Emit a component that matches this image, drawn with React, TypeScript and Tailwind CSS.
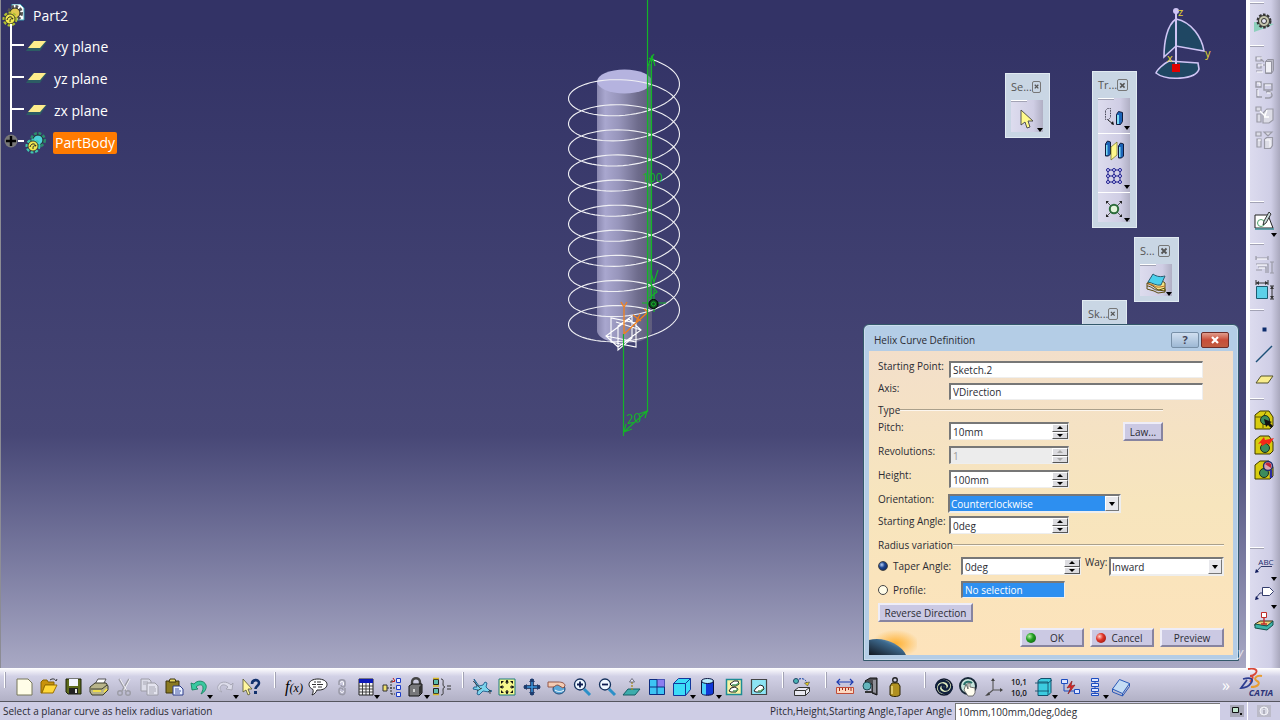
import React, { useState } from "react";

type ToolItem = { icon: string; label: string; drop?: boolean };

// All tool icons share a 24x24 grid
const icons: Record<string, React.ReactNode> = {
  newFile: <path d="M5 4h11l4 4v12H5z" fill="#fffde8" stroke="#77775a" />,
  open: (
    <>
      <path d="M4 7l2-2h4l1 2h6v3H8l-3 8H4z" fill="#c8920c" stroke="#8a6400" />
      <path d="M8 10h12l-4 8H5z" fill="#ffd83a" stroke="#9a7000" />
      <path d="M13 5c3-2 5-1 6 1l1-2" fill="none" stroke="#333" />
    </>
  ),
  save: (
    <>
      <path d="M4 4h15v15H6l-2-2z" fill="#5d6a1c" stroke="#1c2208" />
      <path d="M7 4h9v7H7z" fill="#f2f4ff" />
      <path d="M7 13h9v6H7z" fill="#222" />
      <path d="M13 14h2v4h-2z" fill="#e8e8e8" />
    </>
  ),
  print: (
    <>
      <path d="M8 9l3-5h8l-3 6z" fill="#fff" stroke="#555" />
      <path d="M3 12l5-4h11l2 3v4l-5 5H5l-2-3z" fill="#b8b48a" stroke="#3c3c2c" />
      <path d="M4 14h11l5-4" fill="none" stroke="#3c3c2c" />
      <path d="M6 16h8M17 17l3-3" stroke="#ffe93a" strokeWidth="1.5" />
    </>
  ),
  cut: (
    <>
      <path d="M7 4l7 12M17 4l-7 12" stroke="#9c9ca6" strokeWidth="1.5" />
      <path d="M8 4l7 12M18 4l-6 11" stroke="#fff" strokeWidth=".8" />
      <circle cx="8" cy="18" r="2.3" fill="none" stroke="#9c9ca6" strokeWidth="1.4" />
      <circle cx="16" cy="18" r="2.3" fill="none" stroke="#9c9ca6" strokeWidth="1.4" />
    </>
  ),
  copy: (
    <>
      <path d="M4 4h8l2 2v10H4z" fill="#dcdce8" stroke="#9c9ca6" />
      <path d="M10 8h8l3 3v9H10z" fill="#e4e4ef" stroke="#9c9ca6" />
      <path d="M6 7h5M6 9h3M12 12h6M12 14h7M12 16h7M12 18h5" stroke="#a8a8b4" />
    </>
  ),
  paste: (
    <>
      <path d="M4 6h13v12H4z" fill="#8a7a22" stroke="#3c340c" />
      <path d="M8 4h5l1 3H7z" fill="#e8d860" stroke="#3c340c" />
      <path d="M11 11h7l3 3v6H11z" fill="#e8f0ff" stroke="#2c3c8a" />
      <path d="M13 14h4M13 16h6M13 18h5" stroke="#4c5ca8" />
    </>
  ),
  undo: (
    <path
      d="M4 8l1 7 6-1-2-2c3-3 7-3 7 1 0 2-1 4-2 6 4-2 6-6 5-9-2-5-9-5-12-1z"
      fill="#39c9a0"
      stroke="#137a58"
      strokeWidth=".8"
    />
  ),
  redo: (
    <path
      d="M20 8l-1 7-6-1 2-2c-3-3-7-3-8 1 0 2 1 3 2 4-4-1-5-4-4-6 2-5 9-5 13-1z"
      fill="#dcdcea"
      stroke="#a4a4b2"
      strokeWidth=".9"
    />
  ),
  whatsThis: (
    <>
      <path d="M4 4v13l3-2 2 5 2-1-2-5h4z" fill="#fff6a0" stroke="#55552c" strokeWidth=".8" />
      <path d="M13 9c0-5 7-5 7-1 0 3-3.500 3-3.500 6" fill="none" stroke="#10306c" strokeWidth="2.6" />
      <path d="M15 16h3v3h-3z" fill="#10306c" />
    </>
  ),
  comment: (
    <>
      <path d="M12 4c5 0 9 2 9 5.500S17 15 13 15l-2 0c-1 2-2 4-5 5 1-2 1.500-4 1-5.500C5 13.500 3 12 3 9.500 3 6 7 4 12 4z" fill="#fff" stroke="#222" />
      <path d="M8 7h2M11 7h4M6 9.500h4M11 9.500h6M7 12h3M12 12h4" stroke="#333" />
    </>
  ),
  chain: (
    <>
      <path d="M9 10V7c0-3 6-3 6 0v3c0 3-4 2-4 0M15 13v4c0 4-6 3-6 0v-2c0-3 4-2 4 0" fill="none" stroke="#9a9aa8" strokeWidth="1.500" />
      <path d="M10.500 8c0-2 3-2 3 0v2M13.500 16c0 2-3 2-3 0" fill="none" stroke="#fff" />
    </>
  ),
  table: (
    <>
      <path d="M5 4h14v16H5z" fill="#f4f4f4" stroke="#222" />
      <path d="M5 4h14v4H5z" fill="#0c18b8" />
      <path d="M5 11h14M5 14h14M5 17h14M8.500 8v12M12 8v12M15.500 8v12" stroke="#333" strokeWidth=".9" />
    </>
  ),
  relations: (
    <>
      <path d="M3 10h4v6H3z" fill="#f0e070" stroke="#333" />
      <path d="M7 13h8M11 6v13M11 6h4M11 19h4" stroke="#333" strokeDasharray="2 1" fill="none" />
      <path d="M16.500 3.500h4v4h-4zM16.500 10.500h4v4h-4zM16.500 17.500h4v4h-4z" fill="#eef" stroke="#1c3cc8" />
      <path d="M13 3l2 3-3 1" fill="none" stroke="#c01818" />
    </>
  ),
  padlock: (
    <>
      <path d="M8 10V7c0-5 8-5 8 0v3" fill="none" stroke="#444" strokeWidth="2.400" />
      <path d="M5 11l3-2h10v9l-3 3H5z" fill="#77777a" stroke="#111" />
      <path d="M15 12v8l3-3V9z" fill="#333" />
      <path d="M10 14v3" stroke="#eee" strokeWidth="1.500" />
    </>
  ),
  equiv: (
    <>
      <path d="M3.500 4.500h5v5h-5zM3.500 13.500h5v5h-5z" fill="#5cbcae" stroke="#222" />
      <path d="M3 3.500h6M3 11h6M3 19.500h6" stroke="#d8b820" strokeWidth="1.400" />
      <path d="M11 4c3 0 2 3 2 5s1 3 2 3c-1 0-2 1-2 3s1 5-2 5M17 11h4M17 14h4" fill="none" stroke="#333" />
    </>
  ),
  fly: (
    <>
      <path d="M4 4l5 7 4-1 2-3 2 1-1 4 3 3 3 1-3 1-6-1-4 4-2-1 1-4-5-1 1-2 3 0z" fill="#7cd4ec" stroke="#1c5c8c" strokeWidth=".9" />
      <path d="M3 6l8 8M18 17l2-2v4M7 16l5-3" stroke="#333" strokeWidth=".8" fill="none" />
    </>
  ),
  fitAll: (
    <>
      <path d="M4 4h16v16H4z" fill="#f8f88c" stroke="#1c7c7c" />
      <path d="M12 5v4M12 15v4M5 12h4M15 12h4" stroke="#111" strokeWidth="1.200" />
      <path d="M10 7.500L12 5l2 2.500zM10 16.500l2 2.500 2-2.500zM7.500 10L5 12l2.500 2zM16.500 10l2.500 2-2.500 2z" fill="#111" />
      <path d="M6 6h3L6 9zM18 6h-3l3 3zM6 18h3l-3-3zM18 18h-3l3-3z" fill="#111" />
    </>
  ),
  pan: (
    <>
      <path d="M12 4v16M4 12h16" stroke="#0c2450" strokeWidth="3.500" />
      <path d="M12 5v14M5 12h14" stroke="#3c98e0" strokeWidth="1.500" />
      <path d="M9 7l3-4 3 4zM9 17l3 4 3-4zM7 9l-4 3 4 3zM17 9l4 3-4 3z" fill="#1c3c70" />
    </>
  ),
  rotate: (
    <>
      <ellipse cx="14" cy="14" rx="6" ry="5" fill="#5ca8d8" stroke="#1c4878" />
      <path d="M3 7h10c4 0 7 1 7 4l-2 2-5-3c-3 0-3 2-5 2H3z" fill="#f4ccb4" stroke="#8c4c3c" strokeWidth=".9" />
      <path d="M10 15c3 2 6 2 9 0" fill="none" stroke="#fff" />
    </>
  ),
  zoomIn: (
    <>
      <path d="M14 14l6 6" stroke="#2c90c8" strokeWidth="3" />
      <circle cx="10" cy="9.500" r="5.500" fill="#eef8ff" stroke="#14305c" strokeWidth="1.300" />
      <path d="M7 9.500h6M10 6.500v6" stroke="#0c1c50" strokeWidth="1.800" />
    </>
  ),
  zoomOut: (
    <>
      <path d="M14 14l6 6" stroke="#2c90c8" strokeWidth="3" />
      <circle cx="10" cy="9.500" r="5.500" fill="#eef8ff" stroke="#14305c" strokeWidth="1.300" />
      <path d="M7 9.500h6" stroke="#0c1c50" strokeWidth="1.800" />
    </>
  ),
  normalView: (
    <>
      <path d="M8 14h12l-5 6H3z" fill="#3cacac" stroke="#145c64" />
      <path d="M12 15V6" stroke="#a88c20" strokeDasharray="2 1" strokeWidth="1.300" />
      <path d="M9.500 7L12 3.500 14.500 7z" fill="#eef" stroke="#556" strokeWidth=".8" />
    </>
  ),
  multiView: (
    <>
      <path d="M4.500 4.500h15v15h-15z" fill="#3cc4f4" stroke="#0c2c80" />
      <path d="M12 4.500h7.500V12H12z" fill="#8c7cf0" />
      <path d="M12 4.500v15M4.500 12h15" stroke="#0c2c80" />
    </>
  ),
  isoView: (
    <>
      <path d="M3.500 8.500l5-5h12v11l-5 6h-12z" fill="#3cdcf8" stroke="#14389c" />
      <path d="M3.500 8.500h12v12M15.500 8.500l5-5" fill="none" stroke="#14389c" />
    </>
  ),
  shading: (
    <>
      <path d="M5.500 6v12c0 3 12 3 12 0V6z" fill="#1038d8" stroke="#0c1440" />
      <path d="M6 7h4v12.500C8 19.500 6 19 6 18z" fill="#4cd0f8" />
      <ellipse cx="11.500" cy="6" rx="6" ry="2.500" fill="#b8ecfc" stroke="#0c1440" />
    </>
  ),
  hideShow: (
    <>
      <path d="M4.500 4.500h15v15h-15z" fill="#f8f4a4" stroke="#1c8c94" strokeWidth="1.500" />
      <path d="M8 9l4-3h4l1 3-3 2h-4zM7 16l2-3 4-1 3 2-2 3H9z" fill="#fff" stroke="#222" />
      <path d="M10 10h4l3-2M11 16h3l2-2" stroke="#4c9c5c" strokeWidth="1.500" fill="none" />
    </>
  ),
  swapVisible: (
    <>
      <path d="M4.500 4.500h15v15h-15z" fill="#8ce4f4" stroke="#444" strokeWidth="1.200" />
      <path d="M7 16l2-3 4-3 3 1 1 3-3 3H9z" fill="#fff" stroke="#222" />
      <path d="M11 16h3l2-2" stroke="#4c9c5c" strokeWidth="1.500" fill="none" />
    </>
  ),
  material: (
    <>
      <path d="M4.500 15.500l4-3h11v4l-4 4h-11zM4.500 15.500h11v5M15.500 15.500l4-3" fill="#e8e8f0" stroke="#333" />
      <circle cx="6" cy="6" r="2.500" fill="#48b4b4" stroke="#246" />
      <path d="M9 4c4-1 7 0 8 5" fill="none" stroke="#0c3ca0" strokeDasharray="2 1" />
      <path d="M14.500 8l3 3 2-4z" fill="#e8d020" stroke="#444" strokeWidth=".6" />
    </>
  ),
  measure: (
    <>
      <path d="M4 7h16M7 4L4 7l3 3M17 4l3 3-3 3" fill="none" stroke="#1c3cb0" strokeWidth="1.200" />
      <path d="M3.500 12.500h17v6h-17z" fill="#fcd8c0" stroke="#c04c38" />
      <path d="M6.500 13v3M9.500 13v2M12.500 13v3M15.500 13v2M18 13v3" stroke="#a02818" />
    </>
  ),
  clamp: (
    <>
      <path d="M7 6l5-3h7v17l-5-2V9H9z" fill="#4c4c50" stroke="#111" />
      <path d="M15 5h3v13l-3-1z" fill="#909098" />
      <circle cx="9" cy="11" r="4" fill="#64b4bc" stroke="#1c4c54" />
      <path d="M7 17h7" stroke="#333" strokeWidth="2" />
    </>
  ),
  weight: (
    <>
      <circle cx="12" cy="5" r="2.300" fill="none" stroke="#222" strokeWidth="1.400" />
      <path d="M9 8h6l2 3v9c-2 2-8 2-10 0v-9z" fill="#b09020" stroke="#2c2408" />
      <path d="M9 11v8" stroke="#ecd880" strokeWidth="1.500" />
    </>
  ),
  update: (
    <>
      <circle cx="12" cy="12" r="8" fill="#e4f0c0" stroke="#10182c" strokeWidth="1.500" />
      <path d="M4 13c0-7 8-9 12-5 3 4-1 8-4 6-2-1-2-3 0-4M20 11c0 7-8 9-12 5-3-4 1-8 4-6 2 1 2 3 0 4" fill="none" stroke="#10203c" strokeWidth="2.200" />
    </>
  ),
  manualUpdate: (
    <>
      <circle cx="11" cy="11" r="8" fill="#c8e4dc" stroke="#182838" strokeWidth="2" />
      <path d="M7 10c1-4 6-4 8-2" fill="none" stroke="#287068" strokeWidth="2" />
      <path d="M9 9l2 5V8h2v4l5 1v5l-2 3h-5l-4-6z" fill="#fffdf0" stroke="#555" strokeWidth=".8" />
    </>
  ),
  axis: (
    <>
      <path d="M11 4v11h9M11 15l-6 5" fill="none" stroke="#555" strokeWidth="1.100" />
      <path d="M9 6l2-3 2 3zM18 13l3 2-3 2zM7 17l-4 4 5-1z" fill="#444" />
    </>
  ),
  meanDims: (
    <>
      <text x="12" y="10" textAnchor="middle" fontSize="8" fontWeight="600" fill="#111">10,1</text>
      <text x="12" y="21" textAnchor="middle" fontSize="8" fontWeight="600" fill="#111">10,0</text>
    </>
  ),
  grid3d: (
    <>
      <path d="M6 5.500l3-2h10v14l-3 3H6z" fill="#3ccce0" stroke="#14506c" />
      <path d="M16 7v13M3 8h13l4-3M3 16h14M6 7h10" fill="none" stroke="#14506c" strokeWidth=".9" />
    </>
  ),
  publish: (
    <>
      <path d="M3.500 4.500h6v4h-6zM16.500 14.500h5v4h-5z" fill="#dde4ff" stroke="#1c4cc0" />
      <path d="M6 9v7h10" fill="none" stroke="#1c4cc0" />
      <path d="M14 6l-5 7 4-1-3 7 7-9-4 1z" fill="#e02828" stroke="#801010" strokeWidth=".6" />
    </>
  ),
  stack: (
    <path d="M8.500 3.500h7v3h-7zM8.500 8.500h7v3h-7zM8.500 13.500h7v3h-7zM8.500 18.500h7v2h-7zM12 6.500v2M12 11.500v2M12 16.500v2" fill="#dfe6ff" stroke="#1c4cc0" />
  ),
  catalog: (
    <>
      <path d="M3.500 14l7-9.500 10 4-7 10z" fill="#c4dcf4" stroke="#2858b8" />
      <path d="M3.500 14v3l10 4 7-9.500v-3M13.500 18.500V21" fill="none" stroke="#2858b8" />
    </>
  ),
  gear: (
    <>
      <path d="M2 12l20 2-6 3-14 5z" fill="#8cd0bc" />
      <circle cx="12" cy="11" r="6" fill="#c8c8a8" stroke="#333" strokeWidth="3" strokeDasharray="2.400 1.400" />
      <circle cx="12" cy="11" r="5.500" fill="#c4c4ac" stroke="#333" />
      <circle cx="12" cy="11" r="2.500" fill="#e4e4f0" stroke="#333" />
    </>
  ),
  ghostPart: (
    <>
      <path d="M13.500 8.500l2-2h6v11l-2 3h-6zM13.500 8.500h6v12" fill="#b8b8c4" stroke="#9494a0" />
      <path d="M14 9h5v10h-5z" fill="#f0f0f6" />
      <path d="M4 4h5v4H4zM5 11h4v4H5zM4 18h6M9 6l3 3M11 12h3" fill="none" stroke="#9a9aa6" strokeWidth="1.200" />
      <path d="M5 5h5M6 12h5M5 19h6" stroke="#fff" />
    </>
  ),
  ghostPair: (
    <>
      <path d="M4 4h5v5H4zM12 6h8v6h-8zM14 14c5-2 9 5 3 6h-4M5 11v8h5" fill="none" stroke="#9a9aa6" strokeWidth="1.400" />
      <path d="M5 5h3v3M13 7h6M15 15h4M6 12v6" fill="none" stroke="#fff" />
    </>
  ),
  ghostCut: (
    <>
      <path d="M4 4h5v4H4zM5 11h4v8H5zM11 10l4-4h6v11l-4 3h-6z" fill="#dcdce6" stroke="#9a9aa6" strokeWidth="1.200" />
      <path d="M8 8l5 5 2-6M12 14h5" fill="none" stroke="#fff" strokeWidth="1.300" />
    </>
  ),
  ghostCube: (
    <>
      <path d="M12.500 11.500l2-2h6v8l-2 3h-6zM4 4h5v4H4zM12 4h8l-4 4zM5 11h4v8H5z" fill="#dcdce6" stroke="#9a9aa6" strokeWidth="1.200" />
      <path d="M13 12h5v7M6 12h3" fill="none" stroke="#fff" />
    </>
  ),
  sketcher: (
    <>
      <path d="M3 6h13l5 13H3z" fill="#fff" stroke="#222" />
      <path d="M3 20h19" stroke="#3c8c94" strokeWidth="1.500" />
      <circle cx="9" cy="14" r="3.500" fill="none" stroke="#4ca46c" />
      <path d="M17 3l-5 9-1 4 3-2 5-9z" fill="#c8d8d8" stroke="#222" strokeWidth=".9" />
    </>
  ),
  ghostDims: (
    <>
      <path d="M4 5h12M4 3v4M16 3v4M20 9v11M18 9h4M18 20h4M4 11h12v9M6 14h8v6M4 17h6" fill="none" stroke="#9a9aa6" strokeWidth="1.200" />
      <path d="M5 6h10M5 12h10M7 15h6" stroke="#fff" />
    </>
  ),
  constraint: (
    <>
      <path d="M4.500 8.500h11v12h-11z" fill="#5cd0e8" stroke="#1c5c70" />
      <path d="M4 5h12M4 2v5M16 2v5M20 8v13M18 8h4M18 21h4" stroke="#333" fill="none" />
      <path d="M4 5l3-2v4zM16 5l-3-2v4zM20 8l-2 3h4zM20 21l-2-3h4z" fill="#333" />
    </>
  ),
  point: <path d="M10.500 10.500h4v4h-4z" fill="#0c2c6c" />,
  line: <path d="M4 20L20 4" stroke="#1c5078" strokeWidth="1.500" />,
  plane: <path d="M9 9h12l-5 7H4z" fill="#f8ec8c" stroke="#54542c" />,
  partGreen: (
    <>
      <path d="M3 7l5-4h9l4 6v9l-3 3H3z" fill="#d8cc10" stroke="#3c3800" />
      <path d="M3 9h8l3-5M11 9v11" fill="none" stroke="#5c5600" />
      <circle cx="13" cy="12" r="4.500" fill="#3c8c5c" stroke="#1c2c1c" />
      <path d="M12 11l2 8 2-2 3 3 2-2-3-3 2-1z" fill="#111" />
    </>
  ),
  partRed: (
    <>
      <path d="M3 7l5-4h9l4 6v9l-3 3H3z" fill="#d8cc10" stroke="#3c3800" />
      <circle cx="13" cy="15" r="4.500" fill="#3c8c5c" stroke="#1c2c1c" />
      <path d="M6 11l6-7 1 3 9-2-5 7-2-2-5 3-1-3z" fill="#f42818" />
    </>
  ),
  partBlue: (
    <>
      <path d="M3 7l5-4h9l4 6v9l-3 3H3z" fill="#d8cc10" stroke="#3c3800" />
      <circle cx="12" cy="15" r="4.500" fill="#3c8c5c" stroke="#1c2c1c" />
      <circle cx="16" cy="8" r="4.500" fill="#d8a4b0" stroke="#1c2c6c" strokeWidth="1.400" />
      <path d="M13 6c2-2 4-2 6 0v4z" fill="#c02838" />
      <path d="M19 12v8" stroke="#2c2ca0" strokeWidth="2.500" />
    </>
  ),
  textNote: (
    <>
      <text x="14" y="12" textAnchor="middle" fontSize="8" fill="#1c2c6c">ABC</text>
      <path d="M20 13.500H9L4 19" fill="none" stroke="#333c6c" />
      <path d="M3 20l1-4 3 3z" fill="#111c5c" />
    </>
  ),
  flagNote: (
    <>
      <path d="M10.500 6.500h7l4 4-4 4h-7z" fill="#fff" stroke="#333c6c" />
      <path d="M10 12H8l-4 5" fill="none" stroke="#333c6c" />
      <path d="M3 19l1-4 3 3z" fill="#111c5c" />
    </>
  ),
  stamp: (
    <>
      <path d="M3 15l5-3h13l-5 5H3z" fill="#e8d078" stroke="#3c2c10" />
      <path d="M3 15v4l12 2 6-5v-4l-6 5z" fill="#3cb4a8" stroke="#14504c" />
      <path d="M9.500 3.500h5v5h-5z" fill="#fff" stroke="#c02c2c" />
      <path d="M12 9v6M9 15h6" stroke="#c02c2c" strokeWidth="1.400" />
    </>
  ),
  arrow: (
    <path d="M6 3v15l4-3 2 6 3-1-2-6h5z" fill="#fffa8c" stroke="#444" strokeWidth=".9" />
  ),
  translate: (
    <>
      <path d="M3.500 5.500l2-2h3v9l-2 2h-3z" fill="none" stroke="#445" strokeDasharray="1.500 1" />
      <path d="M6 15l5 4" stroke="#222" />
      <path d="M12 20l-1-4-2 3z" fill="#111" />
      <path d="M14.500 9.500l2-3 4 1v9l-2 3h-4z" fill="#1c64b8" stroke="#101c3c" />
      <path d="M15 10h2v9h-2z" fill="#7cdcf4" />
    </>
  ),
  mirror: (
    <>
      <path d="M3.500 6l2-3 3 1v12l-2 2h-3zM16.500 8l2-3 3 1v12l-2 2h-3z" fill="#1c64b8" stroke="#101c3c" />
      <path d="M4 7h1.500v10H4zM17 9h1.500v10H17z" fill="#7cdcf4" />
      <path d="M9 9l6-5v13l-6 5z" fill="#fff88c" stroke="#6c6c1c" strokeWidth=".7" />
    </>
  ),
  pattern: (
    <>
      <path d="M6 6h12v12H6zM12 6v12M6 12h12" fill="none" stroke="#1c1c8c" />
      {[6, 12, 18].map((x) =>
        [6, 12, 18].map((y) => (
          <circle key={`${x}-${y}`} cx={x} cy={y} r="1.500" fill="#dcdcff" stroke="#1c1c8c" />
        ))
      )}
    </>
  ),
  scale: (
    <>
      <path d="M5 5l4 4M19 5l-4 4M5 19l4-4M19 19l-4-4" stroke="#555" />
      <path d="M4 4h3L4 7zM20 4h-3l3 3zM4 20h3l-3-3zM20 20h-3l3-3z" fill="#222" />
      <circle cx="12" cy="12" r="4.200" fill="#e4f4dc" stroke="#2c6c3c" strokeWidth="2" />
    </>
  ),
  surface: (
    <>
      <path d="M3 12l6 3 5 4 7 1v-8l-4-3z" fill="#f4e484" stroke="#5c4c10" />
      <path d="M3 12v6l7 2 4 2 7-1v-3M3 15c5 0 7 5 12 4l6-2" fill="none" stroke="#5c4c10" />
      <path d="M4 13c6 0 7 4 12 3l5-1" fill="none" stroke="#c0702c" />
      <path d="M4 11l5-8c4 3 8 3 12 2l-4 9c-5 1-8-2-13-3z" fill="#4cd0ec" stroke="#2c5c70" />
    </>
  ),
};

const standardTools: ToolItem[] = [
  { icon: "newFile", label: "New" },
  { icon: "open", label: "Open" },
  { icon: "save", label: "Save" },
  { icon: "print", label: "Print" },
  { icon: "cut", label: "Cut" },
  { icon: "copy", label: "Copy" },
  { icon: "paste", label: "Paste" },
  { icon: "undo", label: "Undo", drop: true },
  { icon: "redo", label: "Redo", drop: true },
  { icon: "whatsThis", label: "What's This?" },
];

const knowledgeTools: ToolItem[] = [
  { icon: "comment", label: "Comment" },
  { icon: "chain", label: "Check" },
  { icon: "table", label: "Design Table", drop: true },
  { icon: "relations", label: "Relations" },
  { icon: "padlock", label: "Lock", drop: true },
  { icon: "equiv", label: "Equivalent Dimensions" },
];

const viewTools: ToolItem[] = [
  { icon: "fly", label: "Fly Mode" },
  { icon: "fitAll", label: "Fit All In" },
  { icon: "pan", label: "Pan" },
  { icon: "rotate", label: "Rotate" },
  { icon: "zoomIn", label: "Zoom In" },
  { icon: "zoomOut", label: "Zoom Out" },
  { icon: "normalView", label: "Normal View" },
  { icon: "multiView", label: "Multi-View" },
  { icon: "isoView", label: "Isometric View", drop: true },
  { icon: "shading", label: "Shading", drop: true },
  { icon: "hideShow", label: "Hide/Show" },
  { icon: "swapVisible", label: "Swap Visible Space" },
];

const measureTools: ToolItem[] = [
  { icon: "measure", label: "Measure Between" },
  { icon: "clamp", label: "Measure Item" },
  { icon: "weight", label: "Measure Inertia" },
];

const otherTools: ToolItem[] = [
  { icon: "update", label: "Update All" },
  { icon: "manualUpdate", label: "Manual Update Mode" },
  { icon: "axis", label: "Axis System" },
  { icon: "meanDims", label: "Mean Dimensions" },
  { icon: "grid3d", label: "Work on Support", drop: true },
  { icon: "publish", label: "Publication" },
  { icon: "stack", label: "Structure", drop: true },
  { icon: "catalog", label: "Catalog" },
];

const planes = ["xy plane", "yz plane", "zx plane"];

const Icon = ({ name }: { name: string }) => (
  <svg viewBox="0 0 24 24" className="size-6 shrink-0" aria-hidden="true">
    {icons[name]}
  </svg>
);

const DropArrow = () => (
  <svg viewBox="0 0 6 4" className="absolute right-0 bottom-0 h-1 w-1.5" aria-hidden="true">
    <path d="M0 0h6L3 4z" fill="#000" />
  </svg>
);

const ToolButton = ({ item, tight }: { item: ToolItem; tight?: boolean }) => (
  <button
    aria-label={item.label}
    className={`relative flex h-[25px] items-center ${tight ? "min-w-6" : "min-w-[25px]"} ${
      item.drop ? "pr-0.5" : ""
    }`}
  >
    <Icon name={item.icon} />
    {item.drop && <DropArrow />}
  </button>
);

const ToolGroup = ({ items, tight }: { items: ToolItem[]; tight?: boolean }) => (
  <div className="flex pt-1.5">
    {items.map((item) => (
      <ToolButton key={item.label} item={item} tight={tight} />
    ))}
  </div>
);

const Separator = ({ className }: { className: string }) => (
  <span className={`mt-1 h-4 w-0.5 shrink-0 border-r border-[#a3a3b5] bg-white ${className}`} />
);

const BottomBar = () => (
  <div className="flex h-[34px] items-start overflow-hidden border-b border-[#55555f] bg-linear-to-b from-white via-[#d2d1e6] via-25% to-[#b2b1c6]">
    <Separator className="mr-1.5 ml-1" />
    <ToolGroup items={standardTools} />
    <Separator className="mr-1.5 ml-2.5" />
    <div className="flex">
      <button aria-label="Formula" className="mt-1.5 h-[25px] w-6 text-center font-['Liberation_Serif',serif] text-base leading-6 whitespace-nowrap text-black italic">
        f<span className="text-xs">(x)</span>
      </button>
      <ToolGroup items={knowledgeTools} tight />
    </div>
    <Separator className="mr-1.5 ml-2" />
    <ToolGroup items={viewTools} />
    <Separator className="mr-1.5 ml-2.5" />
    <ToolGroup items={[{ icon: "material", label: "Apply Material" }]} />
    <Separator className="mr-1.5 ml-2.5" />
    <ToolGroup items={measureTools} />
    <Separator className="mr-1.5 ml-4" />
    <ToolGroup items={otherTools} />
    <div className="ml-auto flex pr-0.5">
      <button aria-label="More tools" className="mt-0.5 text-base leading-4 text-white">»</button>
      <svg viewBox="0 0 40 32" className="ml-2 h-8 w-10" aria-label="CATIA">
        <path d="M10 1c7-1 11 1 7 5-1 1-3 2-5 2 4 0 3 3 0 6" fill="none" stroke="#d84838" strokeWidth="1.800" />
        <path d="M5 11c8-2 11 0 8 4-2 3-6 5-10 5l6-8" fill="none" stroke="#2c3c90" strokeWidth="1.800" />
        <path d="M24 8c-6-1-9 3-5 5s1 6-6 6" fill="none" stroke="#e89c30" strokeWidth="2" />
        <text x="23" y="28" textAnchor="middle" fontSize="9" fontStyle="italic" fontWeight="bold" fill="#2c3478">
          CATIA
        </text>
      </svg>
    </div>
  </div>
);

const StatusBar = () => (
  <div className="flex h-[18px] items-center bg-[#cecde5] pl-[3px]">
    <span>Select a planar curve as helix radius variation</span>
    <label htmlFor="power-input" className="ml-auto pr-[3px]">
      Pitch,Height,Starting Angle,Taper Angle
    </label>
    <input
      id="power-input"
      defaultValue="10mm,100mm,0deg,0deg"
      className="h-[17px] w-[265px] border-t border-l border-[#777] bg-white pl-0.5 outline-none"
    />
    <button aria-label="Power input mode" className="ml-1.5 flex h-full w-[22px] items-center justify-center border-r border-white">
      <svg viewBox="0 0 14 12" className="h-3 w-3.5">
        <path d="M0 0h14v12H0z" fill="#a9a9b8" />
        <path d="M2.500 2.500h6v5h-6z" fill="#c4e8d0" stroke="#111" />
        <path d="M10 8h2v2h-2z" fill="#111" />
      </svg>
    </button>
    <button aria-label="Dialog display" className="flex h-full w-8 items-center justify-center">
      <svg viewBox="0 0 14 12" className="h-3 w-3.5">
        <path d="M0 0h14v12H0z" fill="#bbbac8" />
        <circle cx="7" cy="6" r="4" fill="#d8d8e4" stroke="#f4f4f8" />
        <path d="M7 3v1M7 5v4" stroke="#8a8a98" />
      </svg>
    </button>
  </div>
);

const SideMark = ({ className }: { className?: string }) => (
  <span className={`h-0.5 w-3.5 shrink-0 border-b border-[#a3a3b5] bg-white ${className ?? ""}`} />
);

const SideTool = ({ icon, label, drop }: ToolItem) => (
  <button aria-label={label} className={`relative ml-0.5 flex w-[25px] shrink-0 ${drop ? "h-7" : "h-[25px]"}`}>
    <Icon name={icon} />
    {drop && <DropArrow />}
  </button>
);

const SideBar = () => (
  <div className="flex w-[34px] shrink-0 flex-col border-l-4 border-white bg-linear-to-r from-[#dcdbee] via-[#cfcee6] via-70% to-[#a9a8bd]">
    <SideMark className="mt-0.5 mb-1.5" />
    <SideTool icon="gear" label="Workbench" />
    <SideMark className="mt-2.5 mb-1.5" />
    <SideTool icon="ghostPart" label="Assemble" />
    <SideTool icon="ghostPair" label="Add" />
    <SideTool icon="ghostCut" label="Remove" />
    <SideTool icon="ghostCube" label="Intersect" />
    <SideMark className="mt-12 mb-1.5" />
    <SideTool icon="sketcher" label="Sketch" drop />
    <SideMark className="mt-1.5 mb-2" />
    <SideTool icon="ghostDims" label="Constraints in Dialog" />
    <SideTool icon="constraint" label="Constraint" />
    <SideMark className="mt-1.5 mb-1.5" />
    <SideTool icon="point" label="Point" />
    <SideTool icon="line" label="Line" />
    <SideTool icon="plane" label="Plane" />
    <SideMark className="mt-1.5 mb-2" />
    <SideTool icon="partGreen" label="Select Body" />
    <SideTool icon="partRed" label="Update Body" />
    <SideTool icon="partBlue" label="Inspect Body" />
    <SideMark className="mt-16 mb-1" />
    <SideTool icon="textNote" label="Text with Leader" drop />
    <SideTool icon="flagNote" label="Flag Note with Leader" drop />
    <SideTool icon="stamp" label="Annotation" />
  </div>
);

const Gears = ({ id }: { id: string }) => (
  <svg viewBox="0 0 24 24" className="size-6 shrink-0" aria-hidden="true">
    {id === "root" && <path d="M11 0h8l4 4v12H11z" fill="#fff" stroke="#3ca0b4" />}
    <circle cx="14" cy="9" r="6" fill="none" stroke={id === "root" ? "#555" : "#2c8c6c"} strokeWidth="4" strokeDasharray="2.500 1.500" />
    <circle cx="14" cy="9" r="5" fill={id === "root" ? "#e0c850" : "#4cd0d8"} stroke="#222" />
    <circle cx="9" cy="15" r="5.500" fill="none" stroke={id === "root" ? "#b0c030" : "#40c8b0"} strokeWidth="4" strokeDasharray="2.500 1.500" />
    <circle cx="9" cy="15" r="5" fill="#f0e850" stroke="#222" strokeWidth=".8" />
    <path d="M6 16c1-4 5-4 6-1-3-1-3 1-3 3" fill="none" stroke="#222" />
  </svg>
);

const SpecTree = () => (
  <ul className="relative w-fit text-sm text-white">
    <li className="flex h-[31px] items-center gap-2">
      <Gears id="root" />
      Part2
    </li>
    {planes.map((plane) => (
      <li key={plane} className="flex h-8 items-center pl-[9px]">
        <span className="mb-1 h-0.5 w-3.5 bg-white" />
        <svg viewBox="0 0 24 12" className="mr-1.5 mb-0.5 h-3 w-6" aria-hidden="true">
          <path d="M9 1h14l-7 10H2z" fill="#2c5c64" />
          <path d="M10 1h12l-6 7H4z" fill="#ffec8c" />
        </svg>
        {plane}
      </li>
    ))}
    <li className="flex h-[31px] items-center pl-[3px]">
      <button aria-label="Expand PartBody" className="mb-1 size-3.5 shrink-0">
        <svg viewBox="0 0 14 14">
          <circle cx="7" cy="7" r="6.500" fill="#777" />
          <path d="M7 2v10M2 7h10" stroke="#000" strokeWidth="2.400" />
        </svg>
      </button>
      <span className="mb-1 h-0.5 w-1.5 bg-white" />
      <Gears id="body" />
      <span className="ml-[5px] rounded-xs bg-[#ff7b00] px-0.5 leading-[22px]">PartBody</span>
    </li>
    <span className="absolute top-6 left-[9px] h-27 w-0.5 bg-white" />
  </ul>
);

// Ten turns, sampled and projected as a tilted ellipse that slides down the axis
const helixPath = () => {
  const points: string[] = [];
  const start = -Math.PI / 3;
  const end = start + Math.PI * 20;
  for (let t = start; t < end; t += 0.1) {
    const x = 74 + 55.5 * Math.cos(t);
    const y = 85 + (25.1 * t) / (Math.PI * 2) + 24 * Math.sin(t) - Math.cos(t);
    points.push(`${x.toFixed(1)} ${y.toFixed(1)}`);
  }
  return `M${points.join("L")}`;
};

const Model = () => (
  <svg viewBox="0 0 148 450" className="absolute top-0 left-1/2 h-[450px] w-[148px] -translate-x-1/2" aria-label="Cylinder with helix">
    <defs>
      <linearGradient id="cylinder">
        <stop offset="0" stopColor="#8987ae" />
        <stop offset=".15" stopColor="#a9a7cf" />
        <stop offset=".4" stopColor="#9795bb" />
        <stop offset=".75" stopColor="#6d6b8b" />
        <stop offset="1" stopColor="#5e5c7c" />
      </linearGradient>
    </defs>
    <path d="M47 81v250c2 16 53 16 55 0V81z" fill="url(#cylinder)" />
    <ellipse cx="74.500" cy="81.500" rx="27.500" ry="12" fill="#b5b3df" />
    <path d="M98 64h4v236h-4z" fill="#3c8c58" opacity=".6" />
    <path d={helixPath()} fill="none" stroke="#f0f0f4" strokeWidth="1.100" />
    <g fill="none" stroke="#fff" strokeWidth="1.100">
      <path d="M61 318v24l25 5v-24zM56 336l23-17 12 11-23 17zM68 326v24l14-12v-22zM56 336l30 6M66 322l25 8" />
    </g>
    <g fill="none" stroke="#f0801c" strokeWidth="1.300">
      <path d="M74 334v-24M71 302l3 5 3-5M74 307v5M74 334l24-22M83 315l8 6M90 314l-4 8M94 309l4 3" />
    </g>
    <g fill="none" stroke="#14b428" strokeWidth="1.200">
      <path d="M97.500 0v412M101.500 56v246M73.500 334v102" />
      <path d="M98 66l4-10 3 10M99 58l6 4M104 54l-5 8M100 270l4 12 4-12M99 282l8 10-8 6M92 303h24M104 290v22" />
      <path d="M74 432l23-21M74 432l2-8M74 432l8-3M97 411l-8 3M97 411l-2 7" />
    </g>
    <circle cx="103.500" cy="304" r="4.500" fill="#144c24" stroke="#000" />
    <circle cx="103.500" cy="304" r="2" fill="none" stroke="#14b428" />
    <text x="92" y="182" fontSize="12" fill="#14b428">100</text>
    <text x="77" y="424" fontSize="13" fill="#14b428" transform="rotate(-8 77 424)">20</text>
  </svg>
);

const Compass = () => (
  <svg viewBox="0 0 64 76" className="absolute top-1 right-8 h-19 w-16" aria-label="Compass">
    <g fill="#1f4763" stroke="#cfc4f4" strokeWidth="1.600">
      <path d="M26 15C17 21 14 38 14 53l12-11 28 5C52 34 42 18 26 15z" />
      <path d="M19 57c-6 3-12 9-13 12 10 8 40 7 43-4l-1-6z" />
      <path d="M26 8v56" strokeWidth="2" />
    </g>
    <circle cx="26" cy="7" r="3" fill="#cfc4f4" />
    <path d="M22 60h8v8h-8z" fill="#e00000" />
    <g fontSize="11" fill="#e8d82c">
      <text x="28" y="12">z</text>
      <text x="55" y="53">y</text>
      <text x="17" y="58">x</text>
    </g>
  </svg>
);

type PaletteProps = { title: string; className: string; children?: React.ReactNode };

const Palette = ({ title, className, children }: PaletteProps) => (
  <section className={`absolute w-[45px] border border-[#e1eaf2] bg-[#c9d6e4] pr-1.5 pb-[5px] pl-[5px] text-[#555] ${className}`}>
    <header className="flex h-[26px] items-center justify-between pr-0.5 text-[11px]">
      <span>{title}</span>
      <button aria-label={`Close ${title}`} className="size-3 rounded-xs border border-[#777]">
        <svg viewBox="0 0 10 10">
          <path d="M2.500 2.500l5 5M7.500 2.500l-5 5" stroke="#555" strokeWidth="1.800" />
        </svg>
      </button>
    </header>
    {children && (
      <div className="flex flex-col bg-linear-to-r from-[#dddcee] via-[#cfcde4] via-70% to-[#b0afc4]">
        <span className="mb-1 h-0.5 w-4 border-b border-[#a3a3b5] bg-white" />
        {children}
      </div>
    )}
  </section>
);

const PaletteDivider = () => <span className="my-[3px] h-px bg-white" />;

const PaletteTool = ({ icon, label, drop }: ToolItem) => (
  <button aria-label={label} className="relative flex h-[26px] items-center pl-1">
    <Icon name={icon} />
    {drop && <DropArrow />}
  </button>
);

const fieldBorder = "border-t-2 border-l-2 border-r border-b border-t-[#777] border-l-[#777] border-r-[#eee] border-b-[#eee]";
const raised = "border-2 border-t-[#eeedf8] border-l-[#eeedf8] border-r-[#8784a0] border-b-[#8784a0] bg-[#cbc9e3]";

const TextField = ({ id, label, value }: { id: string; label: string; value: string }) => (
  <div className="flex h-[22px] items-start">
    <label htmlFor={id} className="w-[71px] shrink-0 whitespace-nowrap">{label}</label>
    <input id={id} defaultValue={value} className={`h-[17px] w-[254px] bg-white px-0.5 outline-none ${fieldBorder}`} />
  </div>
);

type SpinnerProps = { id: string; value: string; disabled?: boolean };

const Spinner = ({ id, value, disabled }: SpinnerProps) => (
  <div className={`flex h-[18px] w-[120px] shrink-0 ${disabled ? "bg-[#ececec]" : "bg-white"} ${fieldBorder}`}>
    <input
      id={id}
      defaultValue={value}
      disabled={disabled}
      className="min-w-0 flex-1 px-0.5 outline-none disabled:text-[#999]"
    />
    <div className="flex w-4 flex-col">
      {["M2 4h6L5 1z", "M2 1h6L5 4z"].map((d, i) => (
        <button
          key={d}
          type="button"
          disabled={disabled}
          aria-label={i === 0 ? "Increase" : "Decrease"}
          className="flex flex-1 items-center justify-center border border-t-white border-r-[#555] border-b-[#555] border-l-white bg-[#dcdce0]"
        >
          <svg viewBox="0 0 10 5" className="h-[5px] w-2.5">
            <path d={d} fill={disabled ? "#aaa" : "#000"} />
          </svg>
        </button>
      ))}
    </div>
  </div>
);

const SpinnerRow = ({ label, children, ...spinner }: SpinnerProps & { label: string; children?: React.ReactNode }) => (
  <div className="flex h-6 items-start">
    <label htmlFor={spinner.id} className="w-[71px] shrink-0 whitespace-nowrap">{label}</label>
    <Spinner {...spinner} />
    {children}
  </div>
);

const SelectArrow = () => (
  <span className="pointer-events-none absolute top-0.5 right-0.5 bottom-0.5 flex w-3.5 items-center justify-center border border-t-white border-r-[#777] border-b-[#777] border-l-white bg-[#e8e8ec]">
    <svg viewBox="0 0 6 4" className="h-1 w-1.5">
      <path d="M0 0h6L3 4z" fill="#000" />
    </svg>
  </span>
);

const GroupTitle = ({ title, className }: { title: string; className?: string }) => (
  <div className={`flex h-[17px] items-start ${className ?? ""}`}>
    {title}
    <span className="mt-1 h-0.5 flex-1 border-t border-b border-t-[#aaa08c] border-b-white/70" />
  </div>
);

const ActionButton = ({ label, color }: { label: string; color?: string }) => (
  <button type="button" className={`flex h-[19px] w-16 items-center px-1 ${raised}`}>
    {color && <span className={`size-2.5 shrink-0 rounded-full ${color}`} />}
    <span className="flex-1 text-center">{label}</span>
  </button>
);

const HelixDialog = () => {
  const [mode, setMode] = useState("taper");
  const radio =
    "mt-1 size-2.5 shrink-0 appearance-none rounded-full border border-[#444] bg-[#fffce8] checked:bg-radial-[at_35%_35%] checked:from-[#b8d0f4] checked:via-[#1c4490] checked:via-40% checked:to-[#0c1c4c]";

  return (
    <form
      role="dialog"
      aria-labelledby="dialog-title"
      onSubmit={(e) => e.preventDefault()}
      className="absolute top-[324px] right-[7px] w-[376px] rounded-t-md border border-[#34596b] bg-[#b4cde6] px-[5px] pb-[5px] ring-1 ring-[#dbe8f4]/60 ring-inset"
    >
      <header className="flex h-[26px] items-center pt-1 pr-1 pl-[5px]">
        <h1 id="dialog-title">Helix Curve Definition</h1>
        <button type="button" aria-label="Help" className="ml-auto h-4 w-7 rounded-xs border border-[#7890a8] bg-linear-to-b from-[#d0dff0] to-[#9db8d4] text-center text-[11px] leading-3 font-bold text-[#445]">
          ?
        </button>
        <button type="button" aria-label="Close" className="ml-0.5 flex h-4 w-7 items-center justify-center rounded-xs border border-[#6c2c28] bg-linear-to-b from-[#e09c8c] via-[#c84c38] to-[#c05c40]">
          <svg viewBox="0 0 10 8" className="h-2 w-2.5">
            <path d="M2 1l6 6M8 1L2 7" stroke="#fff" strokeWidth="2.200" />
          </svg>
        </button>
      </header>

      <div className="relative bg-linear-to-b from-[#f3dfca] via-[#f7e5bd] to-[#fde3bb] pt-2.5 pr-[9px] pb-2 pl-[9px] leading-[10px]">
        <TextField id="start-point" label="Starting Point:" value="Sketch.2" />
        <TextField id="axis" label="Axis:" value="VDirection" />
        <GroupTitle title="Type" className="mr-[61px]" />
        <SpinnerRow id="pitch" label="Pitch:" value="10mm">
          <button type="button" className={`ml-[54px] h-[19px] w-10 ${raised}`}>Law...</button>
        </SpinnerRow>
        <SpinnerRow id="revolutions" label="Revolutions:" value="1" disabled />
        <SpinnerRow id="height" label="Height:" value="100mm" />
        <div className="flex h-[22px] items-start">
          <label htmlFor="orientation" className="w-[70px] shrink-0 whitespace-nowrap">Orientation:</label>
          <div className="relative w-[173px]">
            <select
              id="orientation"
              defaultValue="Counterclockwise"
              className="h-[19px] w-full appearance-none border-2 border-t-[#777] border-r-[#eee] border-b-[#eee] border-l-[#777] bg-[#2d8ff0] px-px text-white outline-none"
            >
              <option>Counterclockwise</option>
              <option>Clockwise</option>
            </select>
            <SelectArrow />
          </div>
        </div>
        <SpinnerRow id="start-angle" label="Starting Angle:" value="0deg" />
        <GroupTitle title="Radius variation" />
        <div className="flex h-6 items-start">
          <input id="taper" type="radio" name="radius" className={radio} checked={mode === "taper"} onChange={() => setMode("taper")} />
          <label htmlFor="taper" className="w-[73px] shrink-0 pt-1 pl-[5px] whitespace-nowrap">Taper Angle:</label>
          <Spinner id="taper-angle" value="0deg" />
          <label htmlFor="way" className="ml-1 w-6 shrink-0 whitespace-nowrap">Way:</label>
          <div className="relative flex-1">
            <select
              id="way"
              defaultValue="Inward"
              className="h-[19px] w-full appearance-none border-2 border-t-[#777] border-r-[#eee] border-b-[#eee] border-l-[#777] bg-white px-px outline-none"
            >
              <option>Inward</option>
              <option>Outward</option>
            </select>
            <SelectArrow />
          </div>
        </div>
        <div className="flex h-[22px] items-start">
          <input id="profile" type="radio" name="radius" className={radio} checked={mode === "profile"} onChange={() => setMode("profile")} />
          <label htmlFor="profile" className="w-[73px] shrink-0 pt-1 pl-[5px]">Profile:</label>
          <input aria-label="Profile selection" defaultValue="No selection" className={`h-[17px] w-[104px] bg-[#2d8ff0] px-0.5 text-white outline-none ${fieldBorder}`} />
        </div>
        <button type="button" className={`block h-[19px] w-[95px] whitespace-nowrap ${raised}`}>Reverse Direction</button>
        <div className="mt-1.5 flex justify-end gap-1.5">
          <ActionButton label="OK" color="bg-radial-[at_35%_35%] from-[#b8f0a8] via-[#20a020] via-40% to-[#0c5010]" />
          <ActionButton label="Cancel" color="bg-radial-[at_35%_35%] from-[#ffd0c8] via-[#e03428] via-40% to-[#801008]" />
          <ActionButton label="Preview" />
        </div>
        <svg viewBox="0 0 48 28" className="absolute bottom-0 left-0 h-7 w-12" aria-hidden="true">
          <defs>
            <radialGradient id="glow" cx=".55" cy=".6" r=".5">
              <stop offset="0" stopColor="#ffb030" />
              <stop offset="1" stopColor="#ffb030" stopOpacity="0" />
            </radialGradient>
            <linearGradient id="planet" x1="1" y1="0" x2="0" y2="1">
              <stop offset="0" stopColor="#b4dcf0" />
              <stop offset=".4" stopColor="#3c688c" />
              <stop offset="1" stopColor="#141820" />
            </linearGradient>
          </defs>
          <path d="M0 0h48v28H0z" fill="url(#glow)" />
          <path d="M0 13c14-4 32 4 37 15H0z" fill="url(#planet)" />
        </svg>
      </div>
    </form>
  );
};

const App = () => {
  return (
    <div className="flex min-h-screen flex-col font-['Open_Sans',sans-serif] text-[10px] text-[#2b2b33]">
      <div className="flex flex-1">
        <main className="relative flex-1 overflow-hidden border-l border-[#8c8c94] bg-linear-to-b from-[#333366] from-5% via-[#474776] via-65% to-[#a9a9c4]">
          <SpecTree />
          <Model />
          <Compass />
          <Palette title="Se..." className="top-[73px] right-[196px]">
            <PaletteTool icon="arrow" label="Select" drop />
          </Palette>
          <Palette title="Tr..." className="top-[71px] right-[109px]">
            <PaletteTool icon="translate" label="Translation" drop />
            <PaletteDivider />
            <PaletteTool icon="mirror" label="Mirror" />
            <PaletteTool icon="pattern" label="Rectangular Pattern" drop />
            <PaletteDivider />
            <PaletteTool icon="scale" label="Scaling" drop />
          </Palette>
          <Palette title="S..." className="top-[237px] right-[67px]">
            <PaletteTool icon="surface" label="Thick Surface" drop />
          </Palette>
          <Palette title="Sk..." className="top-[300px] right-[119px]" />
          <HelixDialog />
          <span className="absolute right-[3px] bottom-2 text-[11px] text-white/80 italic">y</span>
        </main>
        <SideBar />
      </div>
      <BottomBar />
      <StatusBar />
    </div>
  );
};

export default App;
